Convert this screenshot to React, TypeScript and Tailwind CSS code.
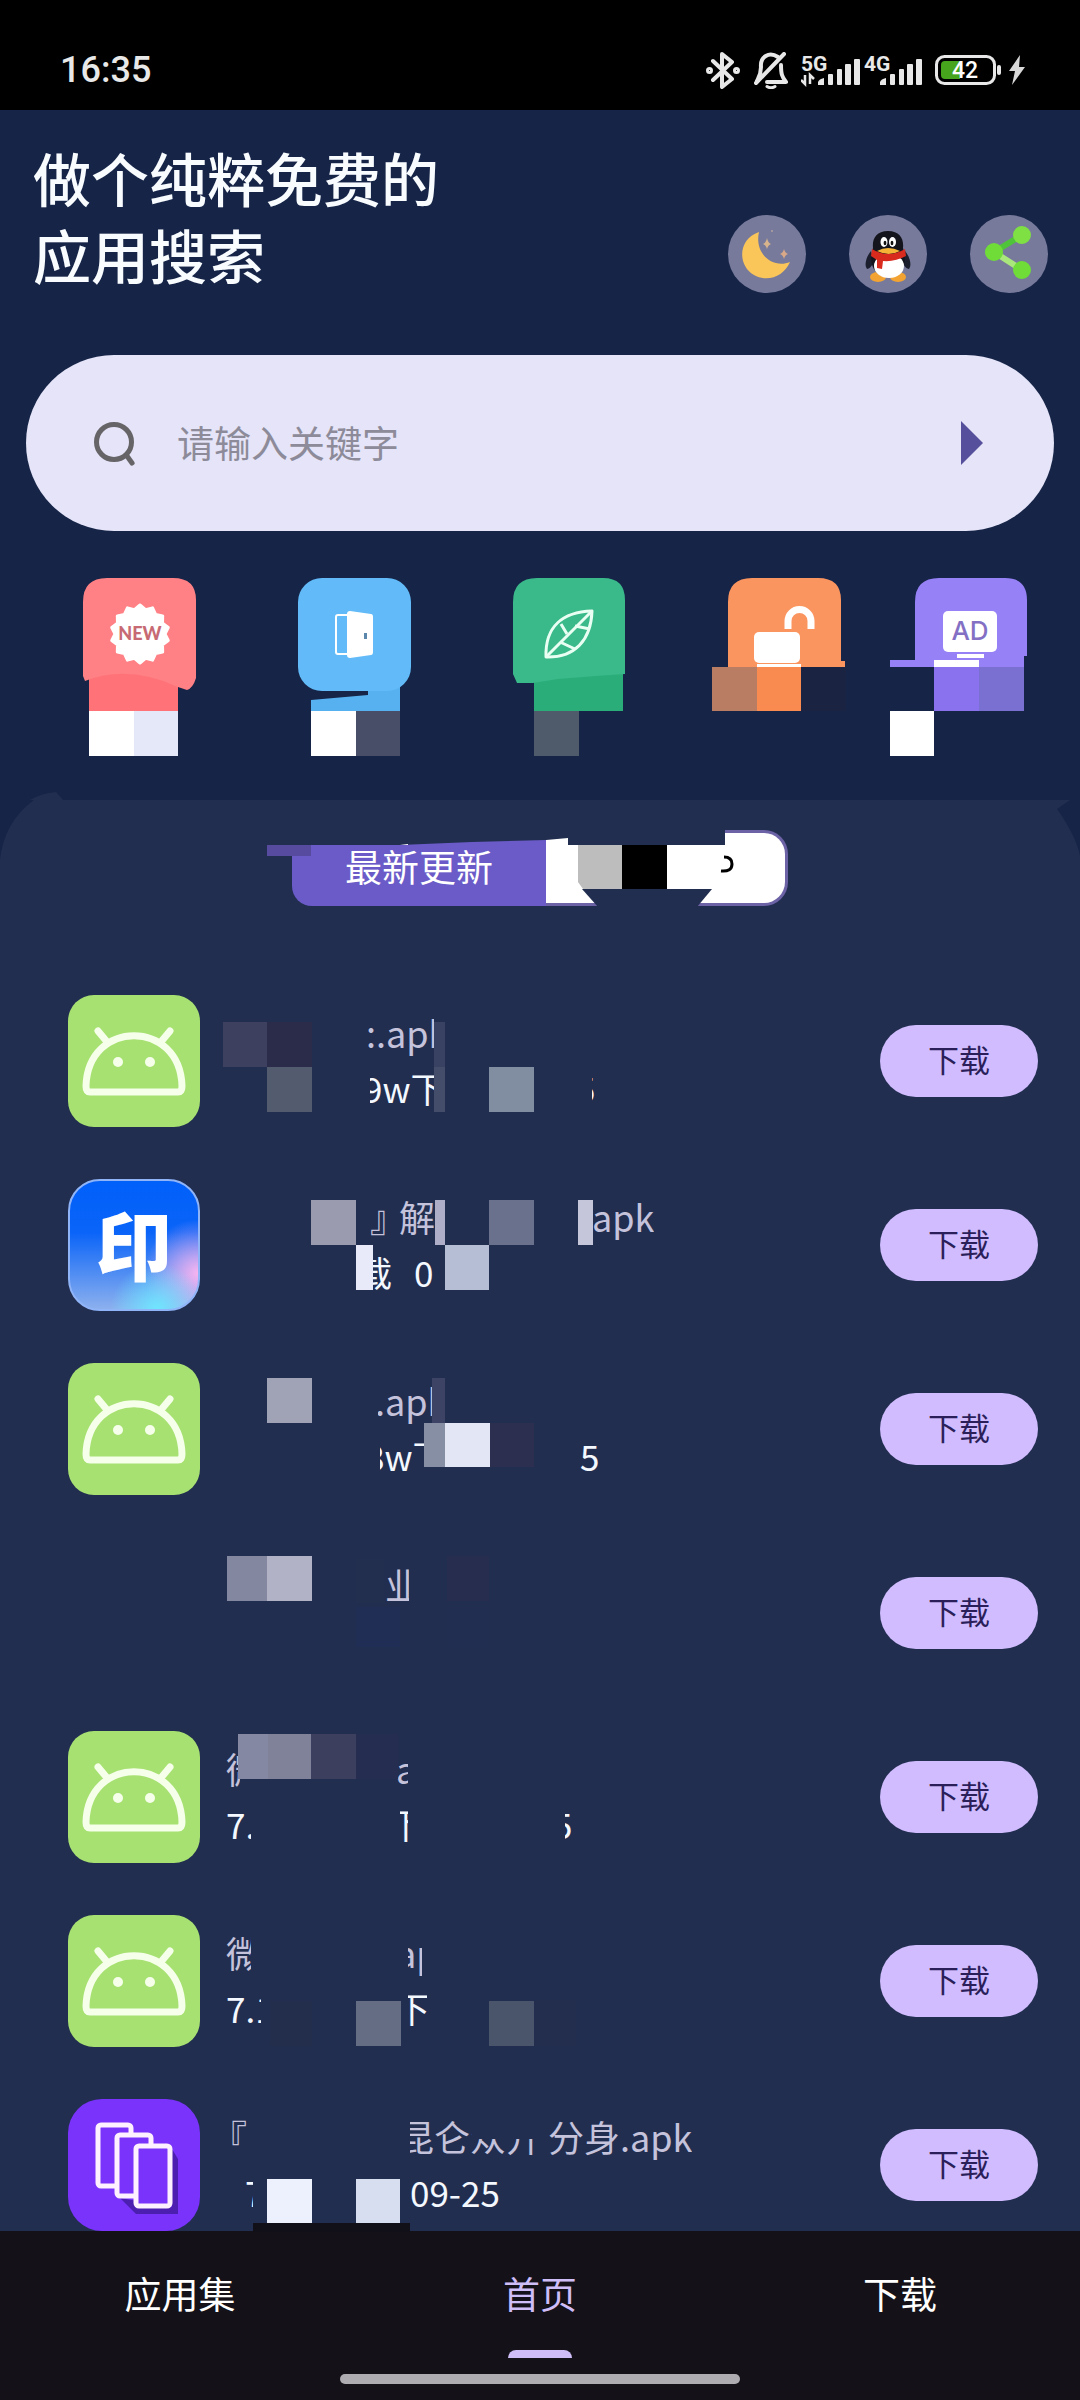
import React, { useState } from 'react';

interface Fragment {
  gap: number;
  text: string;
  width?: number;
  shift?: number;
}

interface Block {
  x: number;
  y: number;
  w: number;
  h: number;
  color: string;
}

interface AppItem {
  id: number;
  icon: 'android' | 'print' | 'clone' | 'none';
  title: Fragment[];
  meta: Fragment[];
  blocks: Block[];
}

const apps: AppItem[] = [
  {
    id: 1,
    icon: 'android',
    title: [{ gap: 143, text: ':.apk', width: 68 }],
    meta: [
      { gap: 147, text: '9w下', width: 64, shift: -7 },
      { gap: 158, text: '5', width: 3, shift: -16 },
    ],
    blocks: [
      { x: 0, y: 27, w: 44, h: 45, color: '#3e4060' },
      { x: 44, y: 27, w: 45, h: 45, color: '#2b2c4a' },
      { x: 44, y: 72, w: 45, h: 45, color: '#535c6e' },
      { x: 211, y: 27, w: 11, h: 45, color: '#3a4263' },
      { x: 211, y: 72, w: 11, h: 45, color: '#444e6b' },
      { x: 266, y: 72, w: 45, h: 45, color: '#818da0' },
    ],
  },
  {
    id: 2,
    icon: 'print',
    title: [
      { gap: 147, text: '』', width: 16 },
      { gap: 13, text: '解', width: 35 },
      { gap: 158, text: 'apk' },
    ],
    meta: [
      { gap: 150, text: '载', width: 20, shift: -16 },
      { gap: 21, text: '0' },
    ],
    blocks: [
      { x: 88, y: 21, w: 45, h: 45, color: '#9b9bb0' },
      { x: 133, y: 66, w: 17, h: 45, color: '#e8eafa' },
      { x: 212, y: 21, w: 10, h: 45, color: '#aeaec8' },
      { x: 266, y: 21, w: 45, h: 45, color: '#6a718c' },
      { x: 355, y: 21, w: 15, h: 45, color: '#c6c6da' },
      { x: 222, y: 66, w: 44, h: 45, color: '#b5bed4' },
    ],
  },
  {
    id: 3,
    icon: 'android',
    title: [{ gap: 155, text: '.apk', width: 57, shift: -3 }],
    meta: [
      { gap: 157, text: '8w下', width: 45, shift: -15 },
      { gap: 155, text: '5' },
    ],
    blocks: [
      { x: 44, y: 15, w: 45, h: 45, color: '#a0a2b6' },
      { x: 209, y: 15, w: 13, h: 45, color: '#3c4364' },
      { x: 201, y: 60, w: 21, h: 44, color: '#868fa4' },
      { x: 222, y: 60, w: 45, h: 44, color: '#e3e6f4' },
      { x: 267, y: 60, w: 44, h: 44, color: '#2c2f50' },
    ],
  },
  {
    id: 4,
    icon: 'none',
    title: [{ gap: 162, text: '业', width: 24 }],
    meta: [],
    blocks: [
      { x: 4, y: 9, w: 40, h: 45, color: '#83879f' },
      { x: 44, y: 9, w: 45, h: 45, color: '#b2b2c6' },
      { x: 133, y: 12, w: 28, h: 44, color: '#232f4f' },
      { x: 224, y: 9, w: 42, h: 45, color: '#262d4e' },
      { x: 133, y: 60, w: 44, h: 40, color: '#202d54' },
      { x: 224, y: 60, w: 42, h: 40, color: '#212e52' },
    ],
  },
  {
    id: 5,
    icon: 'android',
    title: [
      { gap: 3, text: '微', width: 14 },
      { gap: 156, text: 'a', width: 12 },
    ],
    meta: [
      { gap: 3, text: '7.', width: 25 },
      { gap: 149, text: '下', width: 8, shift: -11 },
      { gap: 157, text: '5', width: 8, shift: -12 },
    ],
    blocks: [
      { x: 15, y: 3, w: 30, h: 45, color: '#8488a3' },
      { x: 45, y: 3, w: 43, h: 45, color: '#80829a' },
      { x: 88, y: 3, w: 45, h: 45, color: '#3d3f5e' },
      { x: 133, y: 3, w: 42, h: 45, color: '#252e50' },
    ],
  },
  {
    id: 6,
    icon: 'android',
    title: [
      { gap: 3, text: '微', width: 25 },
      { gap: 157, text: 'ap', width: 14, shift: -12 },
    ],
    meta: [
      { gap: 3, text: '7.1', width: 35 },
      { gap: 147, text: '下', width: 19, shift: -13 },
    ],
    blocks: [
      { x: 133, y: 86, w: 45, h: 45, color: '#656d84' },
      { x: 266, y: 86, w: 45, h: 45, color: '#4a556c' },
      { x: 47, y: 86, w: 42, h: 45, color: '#232e4c' },
      { x: 311, y: 86, w: 42, h: 45, color: '#232e4f' },
    ],
  },
  {
    id: 7,
    icon: 'clone',
    title: [
      { gap: 4, text: '『', width: 20, shift: -16 },
      { gap: 163, text: '昆仑众开', width: 134, shift: -12 },
      { gap: 4, text: '分身.apk' },
    ],
    meta: [
      { gap: 22, text: '7', width: 8 },
      { gap: 157, text: '09-25' },
    ],
    blocks: [
      { x: 249, y: 14, w: 74, h: 26, color: '#222e50' },
      { x: 44, y: 80, w: 45, h: 44, color: '#edf1fd' },
      { x: 133, y: 80, w: 44, h: 44, color: '#d7def0' },
      { x: 30, y: 124, w: 157, h: 9, color: '#111019' },
    ],
  },
];

const tabs = ['应用集', '首页', '下载'];

const badgePoints = Array.from({ length: 28 }, (_, i) => {
  const r = i % 2 === 0 ? 29 : 25;
  const a = (Math.PI * i) / 14 - Math.PI / 2;
  return `${57 + r * Math.cos(a)},${56 + r * Math.sin(a)}`;
}).join(' ');

const SignalBars = () => (
  <g fill="#e8e8e8">
    <path d="M0 30 V27 Q1 24 6 23 V30Z" />
    <rect x="10" y="19" width="5" height="11" rx="1" />
    <rect x="19" y="14" width="5" height="16" rx="1" />
    <rect x="27" y="9" width="6" height="21" rx="1" />
    <rect x="36" y="4" width="6" height="26" rx="1" />
  </g>
);

const StatusBar = () => (
  <div className="flex h-[110px] items-center justify-between bg-black pt-[30px] pr-[54px] pl-[60px] text-[#e8e8e8]">
    <span className="font-[Roboto,sans-serif] text-[36px] leading-[44px] font-medium">16:35</span>
    <div className="flex items-center">
      <svg className="h-[37px] w-[34px]" viewBox="0 0 34 37" fill="none" stroke="#e8e8e8" strokeWidth="4" strokeLinejoin="round" strokeLinecap="round">
        <path d="M7 9 L26 27 L16 35 V2 L26 10 L7 28" />
        <circle cx="3.5" cy="18.5" r="1.5" />
        <circle cx="30.5" cy="18.5" r="1.5" />
      </svg>
      <svg className="ml-[14px] h-[37px] w-[34px]" viewBox="0 0 34 37" fill="none" stroke="#e8e8e8" strokeWidth="4" strokeLinejoin="round" strokeLinecap="round">
        <path d="M24 5 C15 -1 6 5 7 15 C7 22 5 25 3 29" />
        <path d="M27 13 C27 22 28 25 32 30 H13" />
        <path d="M30 2 L2 31" />
        <path d="M13 34.5 Q17 37 21 34.5" strokeWidth="3" />
      </svg>
      <svg className="ml-[13px] h-[34px] w-[60px]" viewBox="0 0 60 34">
        <text x="0" y="18" fontFamily="Roboto, sans-serif" fontWeight="700" fontSize="21" fill="#e8e8e8">5G</text>
        <path d="M4 22 V31 L0 27 M9 31 V22 L13 26" fill="none" stroke="#e8e8e8" strokeWidth="2.5" />
        <g transform="translate(17 2)">
          <SignalBars />
        </g>
      </svg>
      <svg className="ml-[3px] h-[34px] w-[60px]" viewBox="0 0 60 34">
        <text x="0" y="18" fontFamily="Roboto, sans-serif" fontWeight="700" fontSize="21" fill="#e8e8e8">4G</text>
        <g transform="translate(16 2)">
          <SignalBars />
        </g>
      </svg>
      <svg className="ml-[11px] h-[30px] w-[67px]" viewBox="0 0 67 30">
        <rect x="1.5" y="1.5" width="58" height="27" rx="8" fill="none" stroke="#e8e8e8" strokeWidth="3" />
        <path d="M10 6 H25 V24 H10 Q6 24 6 20 V10 Q6 6 10 6Z" fill="#46a51c" />
        <rect x="62" y="10" width="4" height="10" rx="2" fill="#e8e8e8" />
        <text x="30" y="23" textAnchor="middle" fontFamily="Roboto, sans-serif" fontWeight="500" fontSize="23" fill="#fff">42</text>
      </svg>
      <svg className="ml-[6px] h-[30px] w-[18px]" viewBox="0 0 18 30" fill="#d8d8d8">
        <path d="M12 0 L1 16 H7 L4 30 L17 12 H11Z" />
      </svg>
    </div>
  </div>
);

const MoonIcon = () => (
  <svg className="h-[78px] w-[78px]" viewBox="0 0 78 78">
    <path d="M31 17 C10 24 9 50 26 60 C40 68 56 61 62 47 C45 54 26 39 31 17Z" fill="#fbc659" />
    <path d="M39 23 Q40 28 43 29 Q40 30 39 34 Q38 30 35 29 Q38 28 39 23Z" fill="#d8b48c" />
    <path d="M56 34 Q57 38 60 39 Q57 40 56 44 Q55 40 52 39 Q55 38 56 34Z" fill="#d8a888" />
    <circle cx="44" cy="16" r="1" fill="#b0a0a0" />
  </svg>
);

const PenguinIcon = () => (
  <svg className="h-[78px] w-[78px]" viewBox="0 0 78 78">
    <ellipse cx="29" cy="62" rx="8" ry="5" fill="#f2a332" />
    <ellipse cx="49" cy="62" rx="8" ry="5" fill="#f2a332" />
    <path d="M22 36 C17 42 15 50 18 54 C20 54 23 51 24 48Z" fill="#1b1e2c" />
    <path d="M56 36 C61 42 63 50 60 54 C58 54 55 51 54 48Z" fill="#1b1e2c" />
    <path d="M39 16 C27 16 23 24 24 33 C19 48 25 62 39 62 C53 62 59 48 54 33 C55 24 51 16 39 16Z" fill="#14151c" />
    <ellipse cx="40" cy="51" rx="15" ry="12" fill="#fff" />
    <ellipse cx="35" cy="27" rx="3.5" ry="5" fill="#fff" />
    <ellipse cx="43.5" cy="27" rx="3.5" ry="5" fill="#fff" />
    <ellipse cx="36" cy="28" rx="1.4" ry="2.2" fill="#111" />
    <ellipse cx="43" cy="28" rx="1.4" ry="2.2" fill="#111" />
    <path d="M28 36 Q39 30 51 36 Q40 42 28 36Z" fill="#f6b437" />
    <path d="M23 34 Q39 44 56 34 L57 41 Q46 47 34 46 L33 54 L28 53 V45 L22 41Z" fill="#d92a1e" />
  </svg>
);

const ShareIcon = () => (
  <svg className="h-[78px] w-[78px]" viewBox="0 0 78 78">
    <path d="M24 37 L52 20" stroke="#4fc43a" strokeWidth="6" />
    <path d="M24 37 L52 55" stroke="#a9e77c" strokeWidth="6" />
    <circle cx="24" cy="37" r="9" fill="#6fdc38" />
    <circle cx="52" cy="20" r="9" fill="#7fe044" />
    <circle cx="52" cy="55" r="9" fill="#6fdc38" />
  </svg>
);

const NewTile = () => (
  <>
    <path d="M6 85 H95 V133 H6Z" fill="#ff7378" />
    <path d="M0 24 Q0 0 24 0 H90 Q113 0 113 22 V100 Q110 110 104 112 L95 109 Q45 86 2 103 L0 98Z" fill="#ff8185" />
    <rect x="6" y="133" width="45" height="45" fill="#fff" />
    <rect x="51" y="133" width="44" height="45" fill="#e4e8f9" />
    <polygon points={badgePoints} fill="#fff" stroke="#fff" strokeWidth="3" strokeLinejoin="round" />
    <text x="57" y="62" textAnchor="middle" fontFamily="Lato, sans-serif" fontWeight="900" fontSize="18" fill="#c76a74">NEW</text>
  </>
);

const DoorTile = () => (
  <>
    <path d="M13 122 L70 117 L70 100 H102 V133 H13Z" fill="#57b1f1" />
    <rect width="113" height="113" rx="24" fill="#62bbf8" />
    <rect x="13" y="133" width="45" height="45" fill="#fff" />
    <rect x="58" y="133" width="44" height="45" fill="#484d68" />
    <path d="M50 37 H40 Q38 37 38 39 V74 Q38 76 40 76 H50" fill="none" stroke="#fff" strokeWidth="2" />
    <path d="M49 36 Q49 33 52 33 L73 36 Q75 36 75 39 V74 Q75 77 73 77 L52 80 Q49 80 49 77Z" fill="#fff" />
    <rect x="66" y="55" width="3" height="6" fill="#5c87ac" />
  </>
);

const LeafTile = () => (
  <>
    <path d="M21 92 H110 V133 H21Z" fill="#2bad79" />
    <path d="M0 24 Q0 0 24 0 H90 Q112 0 112 22 V96 Q80 98 45 101 L20 105 H4 L0 96Z" fill="#3ab98a" />
    <rect x="21" y="133" width="45" height="45" fill="#4f5a6a" />
    <g fill="none" stroke="#e9fff4" strokeWidth="3" strokeLinejoin="round">
      <path d="M33 79 C32 48 50 34 79 33 C78 62 62 80 33 79Z" />
      <path d="M33 79 L79 33" />
      <path d="M47 64 L62 71 M54 56 L48 46 M62 48 L77 51" strokeWidth="3" />
    </g>
  </>
);

const UnlockTile = () => (
  <>
    <path d="M0 24 Q0 0 24 0 H90 Q113 0 113 22 V83 H117 V89 H0Z" fill="#fb9560" />
    <rect x="-16" y="89" width="45" height="44" fill="#b97d64" />
    <rect x="29" y="89" width="44" height="44" fill="#fa8b50" />
    <rect x="73" y="89" width="45" height="44" fill="#1a2342" />
    <path d="M60 51 V43 A11.5 11.5 0 0 1 83 43 V51" fill="none" stroke="#fff" strokeWidth="7" />
    <rect x="26" y="54" width="46" height="31" rx="5" fill="#fff" />
    <rect x="29" y="86" width="44" height="3" fill="#fff" />
  </>
);

const AdTile = () => (
  <>
    <path d="M0 24 Q0 0 24 0 H90 Q112 0 112 22 V78 H109 V89 H-25 V82 H0Z" fill="#9681f7" />
    <rect x="19" y="89" width="45" height="44" fill="#8a72ee" />
    <rect x="64" y="89" width="45" height="44" fill="#7a70d2" />
    <rect x="-25" y="133" width="44" height="45" fill="#fff" />
    <rect x="28" y="33" width="54" height="41" rx="5" fill="#fff" />
    <rect x="42" y="76" width="27" height="4" fill="#fff" />
    <rect x="19" y="82" width="45" height="7" fill="#fff" />
    <text x="55" y="62" textAnchor="middle" fontFamily="Inter, sans-serif" fontWeight="500" fontSize="26" fill="#8370c4">AD</text>
  </>
);

const AppIcon: React.FC<{ icon: AppItem['icon'] }> = ({ icon }) => {
  if (icon === 'android') {
    return (
      <svg className="h-[132px] w-[132px] shrink-0" viewBox="0 0 132 132">
        <rect width="132" height="132" rx="26" fill="#a7e172" />
        <path d="M22 97 Q18 97 18 91 C20 24 112 24 114 91 Q114 97 110 97Z" fill="none" stroke="#f6ffea" strokeWidth="7" strokeLinejoin="round" />
        <path d="M30 36 L40 48 M102 36 L92 48" stroke="#f6ffea" strokeWidth="7" strokeLinecap="round" />
        <circle cx="50" cy="67" r="5" fill="#f6ffea" />
        <circle cx="82" cy="67" r="5" fill="#f6ffea" />
      </svg>
    );
  }
  if (icon === 'print') {
    return (
      <div className="flex h-[132px] w-[132px] shrink-0 items-center justify-center rounded-[32px] border-2 border-[#8fb4f8] bg-[radial-gradient(circle_at_68%_100%,#6fe6ff_0%,#6fe6ff00_30%),radial-gradient(circle_at_100%_72%,#f7b4f0_0%,#f7b4f000_34%),linear-gradient(180deg,#0060fa_0%,#0a64f8_40%,#8cb0ee_100%)] pb-[6px] text-[76px] leading-[76px] font-black text-white">
        印
      </div>
    );
  }
  if (icon === 'clone') {
    return (
      <svg className="h-[132px] w-[132px] shrink-0" viewBox="0 0 132 132">
        <rect width="132" height="132" rx="34" fill="#7a33fb" />
        <path d="M52 99 L68 115 H110 V60 L104 50 V108Z" fill="#4c1fb0" />
        <g fill="#7a33fb" stroke="#fdf0ff" strokeWidth="5">
          <rect x="30" y="26" width="33" height="61" rx="3" />
          <rect x="49" y="36" width="34" height="61" rx="3" />
          <rect x="68" y="47" width="34" height="60" rx="3" />
        </g>
      </svg>
    );
  }
  return <div className="h-[132px] w-[132px] shrink-0" />;
};

const TextLine: React.FC<{ fragments: Fragment[]; className: string }> = ({ fragments, className }) => (
  <div className={`flex h-[56px] leading-[56px] whitespace-nowrap ${className}`}>
    {fragments.map((f, i) => (
      <span key={i} className="block shrink-0 overflow-hidden" style={{ marginLeft: f.gap, width: f.width }}>
        <span className="block" style={{ marginLeft: f.shift }}>{f.text}</span>
      </span>
    ))}
  </div>
);

const AppRow: React.FC<{ item: AppItem }> = ({ item }) => (
  <li className="flex h-[132px] items-center gap-[23px] pr-[42px] pl-[68px]">
    <AppIcon icon={item.icon} />
    <div className="relative h-[132px] flex-1 pt-[9px]">
      <TextLine fragments={item.title} className="text-[36px] text-[#c5c3dc]" />
      <TextLine fragments={item.meta} className="text-[35px] text-[#f4f8ff]" />
      {item.blocks.map((b, i) => (
        <span
          key={i}
          className="absolute"
          style={{ left: b.x, top: b.y, width: b.w, height: b.h, backgroundColor: b.color }}
        />
      ))}
    </div>
    <button type="button" className="h-[72px] w-[158px] shrink-0 rounded-full bg-[#d0bcff] pb-[3px] text-[31px] text-[#2b1f5a]">
      下载
    </button>
  </li>
);

const App: React.FC = () => {
  const [keyword, setKeyword] = useState('');
  const [tab, setTab] = useState('首页');

  return (
    <div className="flex min-h-screen flex-col bg-[#162447] font-[Noto_Sans_CJK_SC,sans-serif]">
      <StatusBar />

      <header className="flex items-end justify-between pt-[29px] pr-[32px] pl-[33px]">
        <h1 className="text-[58px] leading-[77px] font-medium text-[#f8fcff]">
          做个纯粹免费的
          <br />
          应用搜索
        </h1>
        <div className="flex gap-[43px]">
          <button type="button" aria-label="夜间模式" className="rounded-full bg-[#777a9b]"><MoonIcon /></button>
          <button type="button" aria-label="QQ" className="rounded-full bg-[#777a9b]"><PenguinIcon /></button>
          <button type="button" aria-label="分享" className="rounded-full bg-[#777a9b]"><ShareIcon /></button>
        </div>
      </header>

      <form
        className="mx-[26px] mt-[62px] flex h-[176px] items-center rounded-full bg-[#e5e4f8] pr-[71px] pl-[68px]"
        onSubmit={(e) => e.preventDefault()}
      >
        <svg className="h-[46px] w-[42px] shrink-0" viewBox="0 0 42 46" fill="none" stroke="#666467" strokeWidth="5" strokeLinecap="round">
          <circle cx="20" cy="22" r="17.5" />
          <path d="M33 36 L38 43" />
        </svg>
        <input
          type="text"
          aria-label="搜索"
          placeholder="请输入关键字"
          value={keyword}
          onChange={(e) => setKeyword(e.target.value)}
          className="ml-[41px] h-full min-w-0 flex-1 bg-transparent pb-[3px] text-[37px] text-[#33313d] outline-none placeholder:text-[#8d8b99]"
        />
        <button type="submit" aria-label="开始搜索">
          <svg className="h-[44px] w-[22px]" viewBox="0 0 22 44"><path d="M0 0 L22 22 L0 44Z" fill="#56509c" /></svg>
        </button>
      </form>

      <nav className="mt-[47px] flex gap-[102px] pb-[44px] pl-[83px]">
        <button type="button" aria-label="最新">
          <svg className="h-[178px] w-[113px] overflow-visible" viewBox="0 0 113 178"><NewTile /></svg>
        </button>
        <button type="button" aria-label="入口">
          <svg className="h-[178px] w-[113px] overflow-visible" viewBox="0 0 113 178"><DoorTile /></svg>
        </button>
        <button type="button" aria-label="绿色">
          <svg className="h-[178px] w-[113px] overflow-visible" viewBox="0 0 113 178"><LeafTile /></svg>
        </button>
        <button type="button" aria-label="解锁">
          <svg className="h-[178px] w-[113px] overflow-visible" viewBox="0 0 113 178"><UnlockTile /></svg>
        </button>
        <button type="button" aria-label="广告" className="-ml-7">
          <svg className="h-[178px] w-[113px] overflow-visible" viewBox="0 0 113 178"><AdTile /></svg>
        </button>
      </nav>

      <main className="relative flex flex-1 flex-col items-center bg-[#222e50] pt-[30px]">
        <svg className="absolute bottom-full left-0 h-[8px] w-[64px]" viewBox="0 0 64 8"><path d="M30 8 Q42 1 56 0 L63 8Z" fill="#222e50" /></svg>
        <svg className="absolute top-0 left-0 h-[60px] w-[34px]" viewBox="0 0 34 60"><path d="M0 0 H34 Q4 22 0 60Z" fill="#162447" /></svg>
        <svg className="absolute top-0 right-0 h-[56px] w-[23px]" viewBox="0 0 23 56"><path d="M13 0 H23 V56 Q19 36 0 9Z" fill="#162447" /></svg>

        <div className="relative flex h-[76px] w-[496px]">
          <button type="button" className="w-[254px] rounded-l-[20px] bg-[#6a5bc8] pb-[3px] text-[37px] text-white">最新更新</button>
          <button type="button" aria-label="排行" className="flex-1 rounded-r-[24px] border-[3px] border-l-0 border-[#6c62a6] bg-white" />
          <svg className="pointer-events-none absolute inset-0 h-[76px] w-[496px] overflow-visible" viewBox="0 0 496 76">
            <path d="M-1 -1 H433 V15 H276 V8 L254 10 L180 12 L108 15 H19 V26 H-1Z" fill="#222e50" />
            <path d="M-25 15 H19 V26 H-25Z" fill="#564b9f" />
            <path d="M108 15 L116 14 V15Z" fill="#fff" />
            <path d="M286 15 H330 V59 H291 L286 52Z" fill="#bdbdbd" />
            <rect x="330" y="15" width="45" height="44" fill="#000" />
            <path d="M290 59 H420 L405 77 H306Z" fill="#222e50" />
            <path d="M432 27 Q440 27 440 34 Q440 42 429 41" fill="none" stroke="#000" strokeWidth="3" />
          </svg>
        </div>

        <ul className="mt-[89px] flex w-full flex-col gap-[52px]">
          {apps.map((item) => (
            <AppRow key={item.id} item={item} />
          ))}
        </ul>
      </main>

      <footer className="flex flex-col items-center bg-[#141218] pb-[16px]">
        <div className="flex w-full">
          {tabs.map((name) => (
            <button
              key={name}
              type="button"
              onClick={() => setTab(name)}
              className={`flex h-[127px] flex-1 flex-col items-center justify-between pt-[34px] text-[37px] leading-[56px] ${
                name === tab ? 'text-[#cfbdf8]' : 'text-white'
              }`}
            >
              {name}
              {name === tab && <span className="h-[8px] w-[64px] rounded-t-[8px] bg-[#cfbdf8]" />}
            </button>
          ))}
        </div>
        <div className="mt-[16px] h-[10px] w-[400px] rounded-full bg-[#aeacb1]" />
      </footer>
    </div>
  );
};

export default App;
